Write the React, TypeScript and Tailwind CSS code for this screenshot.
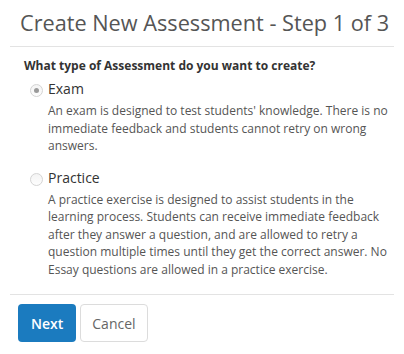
import { useState } from 'react';

const options = [
  {
    id: 'exam',
    label: 'Exam',
    text: "An exam is designed to test students' knowledge. There is no immediate feedback and students cannot retry on wrong answers.",
  },
  {
    id: 'practice',
    label: 'Practice',
    text: 'A practice exercise is designed to assist students in the learning process. Students can receive immediate feedback after they answer a question, and are allowed to retry a question multiple times until they get the correct answer. No Essay questions are allowed in a practice exercise.',
  },
];

export default function App() {
  const [selected, setSelected] = useState('exam');

  return (
    <div className="w-[404px] h-[354px] bg-white font-['Open_Sans',sans-serif] overflow-hidden">
      {/* Header */}
      <div className="pl-[20px] pt-[8px] h-[46px]">
        <h1 className="text-[21.7px] leading-[30px] text-[#555] font-normal whitespace-nowrap">Create New Assessment - Step 1 of 3</h1>
      </div>
      <div className="mx-[10px] border-t border-[#e3e3e3]" />

      {/* Body */}
      <div className="pl-[24px] pr-[10px] pt-[11px] h-[247px]">
        <p className="text-[12px] leading-[16px] font-bold text-[#333]">What type of Assessment do you want to create?</p>
        <div className="mt-[5px] flex flex-col gap-[13px]">
          {options.map(o => (
            <label key={o.id} className="flex gap-[5px] cursor-pointer" onClick={() => setSelected(o.id)}>
              <span className="mt-[5px] ml-[6px] w-[13px] h-[13px] shrink-0 rounded-full border border-[#d4d4d4] bg-gradient-to-b from-[#f4f4f4] to-[#fdfdfd] flex items-center justify-center">
                {selected === o.id && <span className="w-[5px] h-[5px] rounded-full bg-[#9a9a9a]" />}
              </span>
              <span className="flex flex-col">
                <span className="text-[14px] leading-[20px] text-[#333]">{o.label}</span>
                <span className="mt-[3px] text-[12px] leading-[17.5px] text-[#555] pr-[6px]">{o.text}</span>
              </span>
            </label>
          ))}
        </div>
      </div>
      <div className="mx-[10px] border-t border-[#e3e3e3]" />

      {/* Footer */}
      <div className="pl-[18px] pt-[9px] flex gap-[4px]">
        <button className="h-[38px] px-[13px] rounded-[4px] bg-[#1b7bbf] text-white text-[14px] font-semibold">Next</button>
        <button className="h-[38px] px-[11px] rounded-[4px] border border-[#dcdcdc] bg-white text-[#666] text-[14px]">Cancel</button>
      </div>
    </div>
  );
}
